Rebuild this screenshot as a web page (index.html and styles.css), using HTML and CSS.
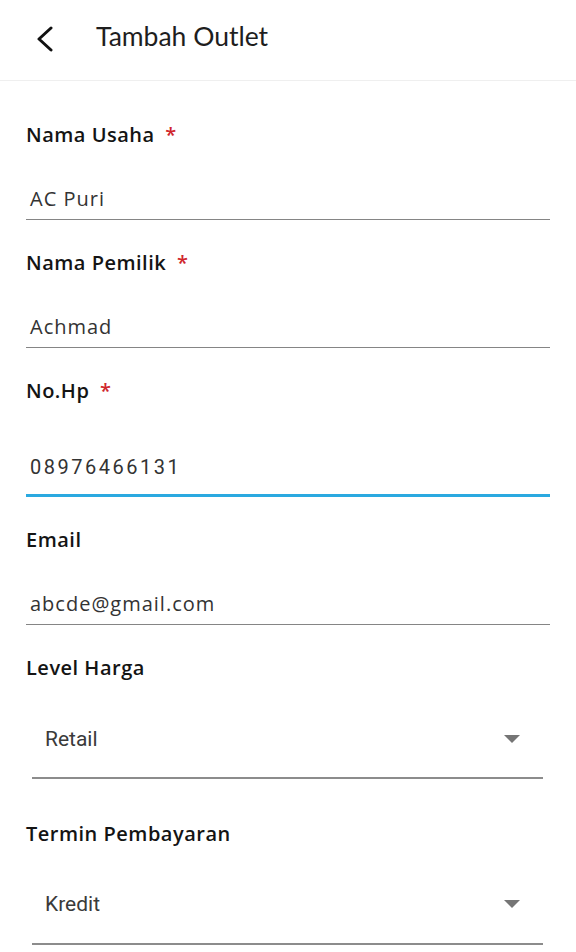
FILE: index.html
```html
<!DOCTYPE html>
<html lang="id">
<head>
<meta charset="utf-8">
<title>Tambah Outlet</title>
<link rel="stylesheet" href="styles.css">
</head>
<body>
<header class="appbar">
  <svg class="back" width="18" height="26" viewBox="0 0 18 26" aria-hidden="true">
    <polyline points="15,2 3,13 15,24" fill="none" stroke="#111" stroke-width="3" stroke-linecap="round" stroke-linejoin="round"/>
  </svg>
  <h1 class="title">Tambah Outlet</h1>
</header>
<main class="form">
  <div class="field">
    <div class="label">Nama Usaha <span class="req">*</span></div>
    <div class="input">AC Puri</div>
  </div>
  <div class="field">
    <div class="label">Nama Pemilik <span class="req">*</span></div>
    <div class="input">Achmad</div>
  </div>
  <div class="field">
    <div class="label">No.Hp <span class="req">*</span></div>
    <div class="input phone">08976466131</div>
  </div>
  <div class="field">
    <div class="label">Email</div>
    <div class="input">abcde@gmail.com</div>
  </div>
  <div class="field">
    <div class="label">Level Harga</div>
    <div class="select"><span>Retail</span><span class="caret"></span></div>
  </div>
  <div class="field">
    <div class="label">Termin Pembayaran</div>
    <div class="select"><span>Kredit</span><span class="caret"></span></div>
  </div>
</main>
</body>
</html>
```
FILE: styles.css
```css
* { box-sizing: border-box; }
html, body { margin: 0; padding: 0; background: #fff; }
body { font-family: "Open Sans", "Noto Sans", sans-serif; color: #111; width: 576px; height: 952px; overflow: hidden; }

.appbar {
  height: 81px;
  border-bottom: 1px solid #efefef;
  display: flex;
  align-items: center;
  padding-left: 36px;
}
.back { display: block; margin-top: -2px; }
.title {
  margin: -8px 0 0 42px;
  font-family: "Lato", sans-serif;
  font-weight: 400;
  font-size: 26.5px;
  line-height: 32px;
  color: #1e1e1e;
}

.form { padding: 0 26px; }

.label {
  margin-top: 29px;
  font-size: 20px;
  line-height: 28px;
  height: 28px;
  font-weight: 600;
  letter-spacing: 0.5px;
  color: #141414;
}
.field:first-child .label { margin-top: 40px; }
.req { color: #d0262c; margin-left: 5px; }

.input {
  margin-top: 36px;
  padding: 0 0 6px 4px;
  font-size: 20px;
  line-height: 28px;
  color: #333;
  letter-spacing: 1px;
  border-bottom: 1px solid #858585;
}
.input.phone {
  margin-top: 48px;
  padding-bottom: 13px;
  font-family: "Roboto", sans-serif;
  letter-spacing: 2.5px;
  border-bottom: 3px solid #2aa9e0;
}

.field:nth-child(6) .label { margin-top: 41px; }

.select {
  margin: 43px 7px 0 6px;
  padding: 0 23px 24px 13px;
  display: flex;
  align-items: center;
  justify-content: space-between;
  font-family: "Roboto", sans-serif;
  font-size: 21px;
  line-height: 28px;
  color: #3a3a3a;
  border-bottom: 2px solid #8c8c8c;
}
.field:nth-child(6) .select { margin-top: 42px; padding-bottom: 25px; }
.caret {
  width: 0; height: 0;
  border-left: 8px solid transparent;
  border-right: 8px solid transparent;
  border-top: 8px solid #757575;
}
```
